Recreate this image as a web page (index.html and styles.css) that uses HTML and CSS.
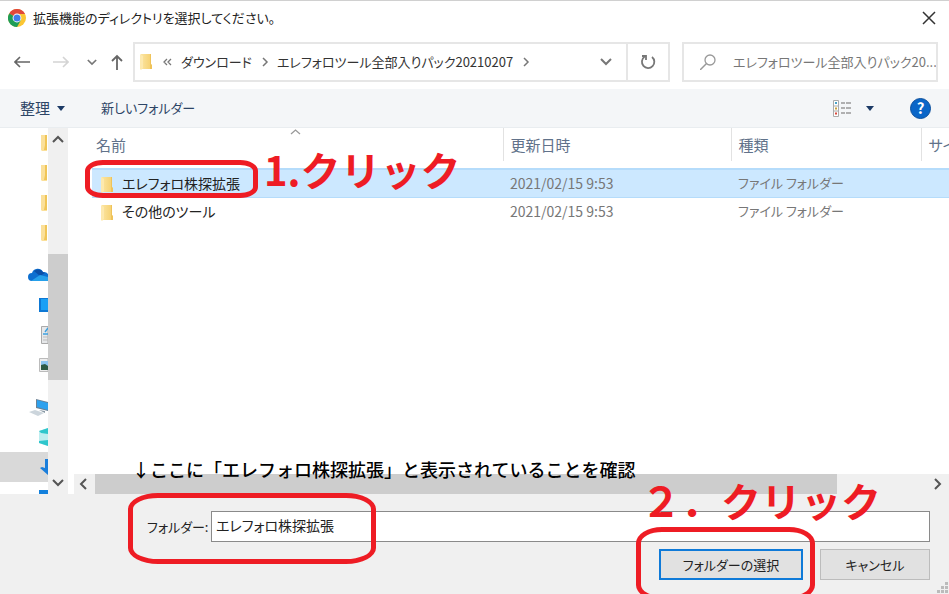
FILE: index.html
```html
<!DOCTYPE html>
<html lang="ja">
<head>
  <meta charset="utf-8">
  <meta name="viewport" content="width=device-width, initial-scale=1">
  <title>拡張機能のディレクトリを選択してください。</title>
  <link rel="stylesheet" href="styles.css">
</head>
<body>

<!-- shared icons -->
<svg class="defs" width="0" height="0" aria-hidden="true">
  <linearGradient id="gold" x1="0" y1="0" x2="1" y2="0">
    <stop offset="0" stop-color="#fbe4a0"/>
    <stop offset="1" stop-color="#f5cf6c"/>
  </linearGradient>
  <symbol id="folder" viewBox="0 0 12 18">
    <path d="M1 1h9v10l2 1v4H1z" fill="url(#gold)"/>
    <path d="M10 1h1v10l1 1v4h-2z" fill="#efc35a"/>
    <path d="M0 1l3 2v12l-2 2-1-1z" fill="#fde9ae"/>
  </symbol>
  <symbol id="folder-cut" viewBox="0 0 7 18">
    <path d="M0 1h6v16H1l-1-1z" fill="#fbe09a"/>
    <path d="M4 1h2v15H3l1-5z" fill="#f0c558"/>
  </symbol>
  <symbol id="down" viewBox="0 0 12 8">
    <path d="M1 1l5 5 5-5" fill="none" stroke="currentColor" stroke-width="2"/>
  </symbol>
  <symbol id="left" viewBox="0 0 8 12">
    <path d="M7 1L2 6l5 5" fill="none" stroke="currentColor" stroke-width="2"/>
  </symbol>
  <symbol id="right" viewBox="0 0 8 12">
    <path d="M1 2l4 4-4 4" fill="none" stroke="currentColor" stroke-width="1.5"/>
  </symbol>
</svg>

<div class="dialog">
  <header class="title-bar">
    <svg class="chrome" width="18" height="18" viewBox="0 0 18 18">
      <circle cx="9" cy="9" r="9" fill="#fbc633"/>
      <path d="M9 9L1.2 4.5A9 9 0 0 1 16.8 4.5L17 5H9z" fill="#e0483a"/>
      <path d="M1.2 4.5A9 9 0 0 0 9 18l4-7H9z" fill="#1f9d57"/>
      <path d="M1.2 4.5L5 11l4-2z" fill="#1f9d57"/>
      <circle cx="9" cy="9" r="4.4" fill="#fff"/>
      <circle cx="9" cy="9" r="3.5" fill="#3f7de8"/>
    </svg>
    <h1>拡張機能のディレクトリを選択してください。</h1>
    <button class="close" aria-label="閉じる">
      <svg width="14" height="14" viewBox="0 0 14 14"><path d="M1 1l12 12M13 1L1 13" stroke="#333" stroke-width="1.5"/></svg>
    </button>
  </header>

  <div class="nav-bar">
    <div class="nav-buttons">
      <button aria-label="戻る"><svg width="16" height="12" viewBox="0 0 16 12"><path d="M1 6h15M6 1L1 6l5 5" fill="none" stroke="#666" stroke-width="1.6"/></svg></button>
      <button aria-label="進む"><svg width="16" height="12" viewBox="0 0 16 12"><path d="M0 6h15M10 1l5 5-5 5" fill="none" stroke="#d4d4d4" stroke-width="1.6"/></svg></button>
      <button class="recent" aria-label="履歴"><svg width="10" height="7"><use href="#down"/></svg></button>
      <button class="up" aria-label="上へ"><svg width="12" height="16" viewBox="0 0 12 16"><path d="M6 16V2M1 7l5-5 5 5" fill="none" stroke="#666" stroke-width="1.8"/></svg></button>
    </div>
    <div class="address">
      <svg width="12" height="18"><use href="#folder"/></svg>
      <svg class="more" width="9" height="8" viewBox="0 0 9 8"><path d="M4 1L1 4l3 3M8 1L5 4l3 3" fill="none" stroke="#777" stroke-width="1.3"/></svg>
      <a href="#">ダウンロード</a>
      <svg class="sep" width="8" height="12"><use href="#right"/></svg>
      <a href="#">エレフォロツール全部入りパック20210207</a>
      <svg class="sep" width="8" height="12"><use href="#right"/></svg>
      <button class="drop" aria-label="場所"><svg width="12" height="8"><use href="#down"/></svg></button>
      <button class="refresh" aria-label="更新">
        <svg width="16" height="16" viewBox="0 0 16 16"><path d="M12 3a6.200 6.200 0 1 1-7.500-.2M2 2h4v4" fill="none" stroke="#777" stroke-width="1.800"/></svg>
      </button>
    </div>
    <label class="search">
      <svg width="16" height="16" viewBox="0 0 16 16"><circle cx="10" cy="6" r="5" fill="none" stroke="#999" stroke-width="1.3"/><path d="M6.500 9.500L0 16" stroke="#999" stroke-width="1.500"/></svg>
      <input type="text" aria-label="検索" placeholder="エレフォロツール全部入りパック20...">
    </label>
  </div>

  <div class="tool-bar">
    <button class="organize">整理<svg width="8" height="5" viewBox="0 0 8 5"><path d="M0 0h8L4 5z" fill="#1c3a66"/></svg></button>
    <button>新しいフォルダー</button>
    <button class="view" aria-label="表示">
      <svg width="19" height="17" viewBox="0 0 19 17">
        <path d="M.5.500h5v16h-5zM.5 6h5M.5 11h5" fill="#fff" stroke="#aaa"/>
        <path d="M8 3h4m1 0h5M8 8h4m1 0h5M8 13h4m1 0h5" stroke="#999" stroke-width="1.500"/>
        <path d="M2 3h2" stroke="#4aa3c8" stroke-width="2"/>
        <path d="M2 8.500h2" stroke="#c9a23c" stroke-width="2"/>
        <path d="M2 13.500h2" stroke="#d9483b" stroke-width="2"/>
      </svg>
      <svg width="8" height="5" viewBox="0 0 8 5"><path d="M0 0h8L4 5z" fill="#1c3a66"/></svg>
    </button>
    <button class="help" aria-label="ヘルプ">?</button>
  </div>

  <div class="content">
    <aside class="tree">
      <ul>
        <li><svg width="7" height="18"><use href="#folder-cut"/></svg></li>
        <li><svg width="7" height="18"><use href="#folder-cut"/></svg></li>
        <li><svg width="7" height="18"><use href="#folder-cut"/></svg></li>
        <li><svg width="7" height="18"><use href="#folder-cut"/></svg></li>
      </ul>
      <ul>
        <li><svg width="20" height="14" viewBox="0 0 20 14"><path d="M4 13a4 4 0 0 1 0-8 6 6 0 0 1 11-1 5 5 0 0 1 5 2v7z" fill="#0d6fd0"/><path d="M6 3a6 6 0 0 1 9 1l2 1-5 3z" fill="#0a4fa8"/><path d="M3 13l9-6 8 2v4z" fill="#26a0ea"/></svg></li>
        <li><svg width="9" height="14" viewBox="0 0 9 14"><path d="M0 0h9v14H0z" fill="#0d78d4"/><path d="M2 1h7v11H2z" fill="#19a0f5"/></svg></li>
        <li><svg width="7" height="18" viewBox="0 0 7 18"><path d="M.5.500H7v17H.5z" fill="#e6e8ea" stroke="#aaa"/><path d="M2 8h5M4 6l3-4" stroke="#3da0e0" stroke-width="1.500"/><path d="M2 11h5M2 14h5" stroke="#bbb"/></svg></li>
        <li><svg width="9" height="14" viewBox="0 0 9 14"><path d="M.5.500H9v13H.5z" fill="#eee" stroke="#bbb"/><path d="M2 3h7v9H2z" fill="#8cc4f0"/><path d="M2 7l4-1 3 2v4H2z" fill="#2e5a45"/></svg></li>
      </ul>
      <ul>
        <li><svg width="19" height="18" viewBox="0 0 19 18"><path d="M7 1l12 3v9L7 10z" fill="#6b8194"/><path d="M8 2l11 3v7L8 9z" fill="#2ea1ee"/><path d="M0 14l6-2 9 3-6 3z" fill="#ccd5dc"/><path d="M10 12l6 1v2z" fill="#8999a5"/></svg></li>
        <li><svg width="9" height="18" viewBox="0 0 9 18"><path d="M0 3l9-3v18l-9-3z" fill="#bdeef0"/><path d="M0 3l9-3v6L2 5zM0 13l9-1v6l-9-3z" fill="#2fc6cc"/></svg></li>
        <li class="current"><svg width="8" height="16" viewBox="0 0 8 16"><path d="M5 0h3v16L0 9l2-1 3 1z" fill="#1a7edb"/></svg></li>
        <li><svg width="9" height="14" viewBox="0 0 9 14"><path d="M0 0h9v14H0z" fill="#1380dc"/></svg></li>
      </ul>
    </aside>
    <div class="scroll-y">
      <svg width="12" height="8" viewBox="0 0 12 8"><path d="M1 7l5-5 5 5" fill="none" stroke="currentColor" stroke-width="2"/></svg>
      <div class="thumb"></div>
      <svg width="12" height="8"><use href="#down"/></svg>
    </div>

    <main class="files">
      <div class="list">
        <table>
          <colgroup><col class="c-name"><col class="c-date"><col class="c-type"><col class="c-size"></colgroup>
          <thead>
            <tr>
              <th>名前<svg class="sort" width="11" height="6" viewBox="0 0 11 6"><path d="M1 5l4.500-4L10 5" fill="none" stroke="#999" stroke-width="1.300"/></svg></th>
              <th>更新日時</th>
              <th>種類</th>
              <th>サイズ</th>
            </tr>
          </thead>
          <tbody>
            <tr class="selected">
              <td><svg width="12" height="18"><use href="#folder"/></svg>エレフォロ株探拡張</td>
              <td>2021/02/15 9:53</td>
              <td>ファイル フォルダー</td>
              <td></td>
            </tr>
            <tr>
              <td><svg width="12" height="18"><use href="#folder"/></svg>その他のツール</td>
              <td>2021/02/15 9:53</td>
              <td>ファイル フォルダー</td>
              <td></td>
            </tr>
          </tbody>
        </table>
        <div class="ring ring-row"></div>
        <p class="step step-1">1.クリック</p>
      </div>
      <div class="scroll-x">
        <svg width="8" height="12"><use href="#left"/></svg>
        <div class="thumb"></div>
        <svg width="8" height="12" viewBox="0 0 8 12"><path d="M1 1l5 5-5 5" fill="none" stroke="currentColor" stroke-width="2"/></svg>
      </div>
    </main>
  </div>

  <footer class="footer">
    <p class="note">↓ここに「エレフォロ株探拡張」と表示されていることを確認</p>
    <div class="field">
      <label for="folder-name">フォルダー:</label>
      <input type="text" id="folder-name" value="エレフォロ株探拡張">
      <div class="ring ring-field"></div>
    </div>
    <div class="actions">
      <div class="pick">
        <button class="primary">フォルダーの選択</button>
        <div class="ring ring-pick"></div>
        <p class="step step-2">２．クリック</p>
      </div>
      <button>キャンセル</button>
    </div>
    <svg class="grip" width="12" height="12" viewBox="0 0 12 12"><path d="M8 0h3v3H8zM4 4h3v3H4zM8 4h3v3H8zM0 8h3v3H0zM4 8h3v3H4zM8 8h3v3H8z" fill="#bbb"/></svg>
  </footer>
</div>

</body>
</html>
```

FILE: styles.css
```css
* {
  box-sizing: border-box;
}
body {
  margin: 0;
  font-family: "Noto Sans CJK JP", sans-serif;
  font-size: 13px;
  line-height: 20px;
  font-feature-settings: "palt";
  color: #222;
  background: #fff;
}
button,
input {
  font: inherit;
  font-feature-settings: inherit;
  color: inherit;
  border: 0;
  padding: 0;
  background: none;
}
svg {
  flex: none;
}
.defs {
  position: absolute;
}
.dialog {
  display: flex;
  flex-direction: column;
  height: 100vh;
  min-height: 400px;
  overflow: hidden;
  border-top: 1px solid #d0d0d0;
}



/* title */
.title-bar {
  display: flex;
  align-items: center;
  height: 34px;
  padding: 0 13px 0 8px;
  gap: 7px;
}
.title-bar h1 {
  flex: 1;
  margin: 0;
  font-size: 13px;
  font-weight: normal;
}
.close {
  display: flex;
}

/* navigation */
.nav-bar {
  display: flex;
  align-items: center;
  padding: 7px 11px 7px 14px;
}
.nav-buttons {
  display: flex;
  align-items: center;
  width: 119px;
  gap: 23px;
  color: #777;
}
.nav-buttons button {
  display: flex;
}
.nav-buttons .recent {
  margin-left: -5px;
}
.nav-buttons .up {
  margin-left: -9px;
}
.address {
  flex: 1;
  display: flex;
  align-items: center;
  height: 40px;
  padding-left: 5px;
  border: 2px solid #e6e6e6;
  white-space: nowrap;
}
.address a {
  color: #333;
  text-decoration: none;
}
.more {
  margin: 0 9px 0 11px;
}
.sep {
  margin: 0 7px 0 10px;
  color: #777;
}
.drop {
  display: flex;
  margin-left: auto;
  margin-right: 14px;
  color: #777;
}
.refresh {
  display: flex;
  align-items: center;
  justify-content: center;
  width: 42px;
  height: 100%;
  border-left: 2px solid #e6e6e6;
}
.search {
  display: flex;
  align-items: center;
  width: 256px;
  height: 40px;
  margin-left: 12px;
  padding-left: 16px;
  gap: 17px;
  border: 2px solid #e6e6e6;
}
.search input {
  flex: 1;
  min-width: 0;
  outline: none;
}
.search input::placeholder {
  color: #777;
  opacity: 1;
}

/* commands */
.tool-bar {
  display: flex;
  align-items: center;
  height: 39px;
  padding: 0 18px 0 20px;
  gap: 36px;
  color: #2d4566;
  background: #f4f6f8;
  border-bottom: 1px solid #e9edf0;
}
.tool-bar button {
  display: flex;
  align-items: center;
  gap: 7px;
}
.tool-bar .organize {
  font-size: 15px;
}
.tool-bar .view {
  margin-left: auto;
  gap: 14px;
}
.tool-bar .help {
  justify-content: center;
  width: 21px;
  height: 21px;
  color: #fff;
  font-size: 15px;
  font-weight: bold;
  background: #0a66c8;
  border: 1px solid #0b4f9c;
  border-radius: 50%;
}



/* folder tree */
.content {
  flex: 1;
  min-height: 0;
  display: flex;
}
.tree {
  width: 48px;
  overflow: hidden;
}
.tree ul {
  margin: 0 0 12px;
  padding: 0;
  list-style: none;
}
.tree li {
  display: flex;
  align-items: center;
  justify-content: flex-end;
  height: 30px;
}
.tree .current {
  background: #d9d9d9;
}
.scroll-y,
.scroll-x {
  display: flex;
  align-items: center;
  color: #555;
  background: #f0f0f0;
}
.thumb {
  background: #cdcdcd;
}
.scroll-y {
  flex-direction: column;
  justify-content: space-between;
  width: 20px;
  padding: 7px 0;
}
.scroll-y .thumb {
  width: 100%;
  height: 36%;
  margin-top: 12px;
}

/* file list */
.files {
  flex: 1;
  min-width: 0;
  display: flex;
  flex-direction: column;
  margin-left: 6px;
}
.list {
  flex: 1;
  position: relative;
  overflow: hidden;
  padding-left: 18px;
}
table {
  width: 1028px;
  table-layout: fixed;
  border-collapse: collapse;
}
.c-name {
  width: 411px;
}
.c-date {
  width: 228px;
}
.c-type {
  width: 190px;
}
th {
  position: relative;
  height: 33px;
  padding: 0 0 0 7px;
  font-size: 15px;
  font-weight: normal;
  text-align: left;
  color: #61728a;
  border-right: 1px solid #e2e2e2;
}
th:first-child {
  padding-left: 4px;
}
.sort {
  position: absolute;
  top: 1px;
  left: 50%;
  margin-left: -7px;
}
tbody::before {
  content: "";
  display: block;
  height: 7px;
}
td {
  height: 28px;
  padding: 0 0 0 7px;
  color: #777;
  vertical-align: middle;
}
td:first-child {
  padding-left: 9px;
  color: #222;
}
td:first-child,
td:nth-child(2) {
  font-size: 14px;
}
td svg {
  margin-right: 9px;
  vertical-align: middle;
}
.selected td {
  background: #cce8ff;
  border-top: 2px solid #b5dcfb;
  border-bottom: 1px solid #b5dcfb;
}
.scroll-x {
  height: 20px;
  padding: 0 7px 0 5px;
  justify-content: space-between;
}
.scroll-x .thumb {
  width: 86%;
  height: 100%;
  margin-left: 8px;
  margin-right: auto;
}



/* bottom */
.footer {
  position: relative;
  padding: 17px 19px 14px 147px;
  background: #f0f0f0;
}
.field {
  position: relative;
  display: flex;
  align-items: center;
  gap: 5px;
}
.field label {
  width: 59px;
  white-space: nowrap;
}
.field input {
  flex: 1;
  height: 31px;
  padding: 0 4px 3px;
  font-size: 14px;
  background: #fff;
  border: 1px solid #8a8a8a;
}
.actions {
  display: flex;
  justify-content: flex-end;
  margin-top: 7px;
  gap: 17px;
}
.pick {
  position: relative;
}
.actions button {
  width: 110px;
  height: 31px;
  background: #e1e1e1;
  border: 1px solid #bcbcbc;
}
.actions .primary {
  width: 144px;
  border: 2px solid #0f7ad8;
}
.grip {
  position: absolute;
  right: 0;
  bottom: 0;
}

/* red marks */
.ring {
  position: absolute;
  border: 5px solid #ee1c24;
  pointer-events: none;
}
.ring-row {
  top: 32px;
  left: 11px;
  width: 173px;
  height: 38px;
  border-radius: 18px / 11px;
}
.ring-field {
  top: -18px;
  left: -19px;
  width: 248px;
  height: 71px;
  border-radius: 30px / 16px;
}
.ring-pick {
  top: -22px;
  left: -23px;
  width: 179px;
  height: 74px;
  border-radius: 26px / 16px;
}
.step {
  position: absolute;
  margin: 0;
  font-size: 40px;
  font-weight: bold;
  line-height: 40px;
  font-feature-settings: normal;
  white-space: nowrap;
  color: #ee1c24;
}
.step-1 {
  top: 21px;
  left: 190px;
}
.step-2 {
  top: -69px;
  left: -18px;
}
.note {
  position: absolute;
  top: -35px;
  left: 132px;
  margin: 0;
  font-size: 18px;
  font-weight: 500;
  font-feature-settings: normal;
  white-space: nowrap;
  color: #000;
}
```
